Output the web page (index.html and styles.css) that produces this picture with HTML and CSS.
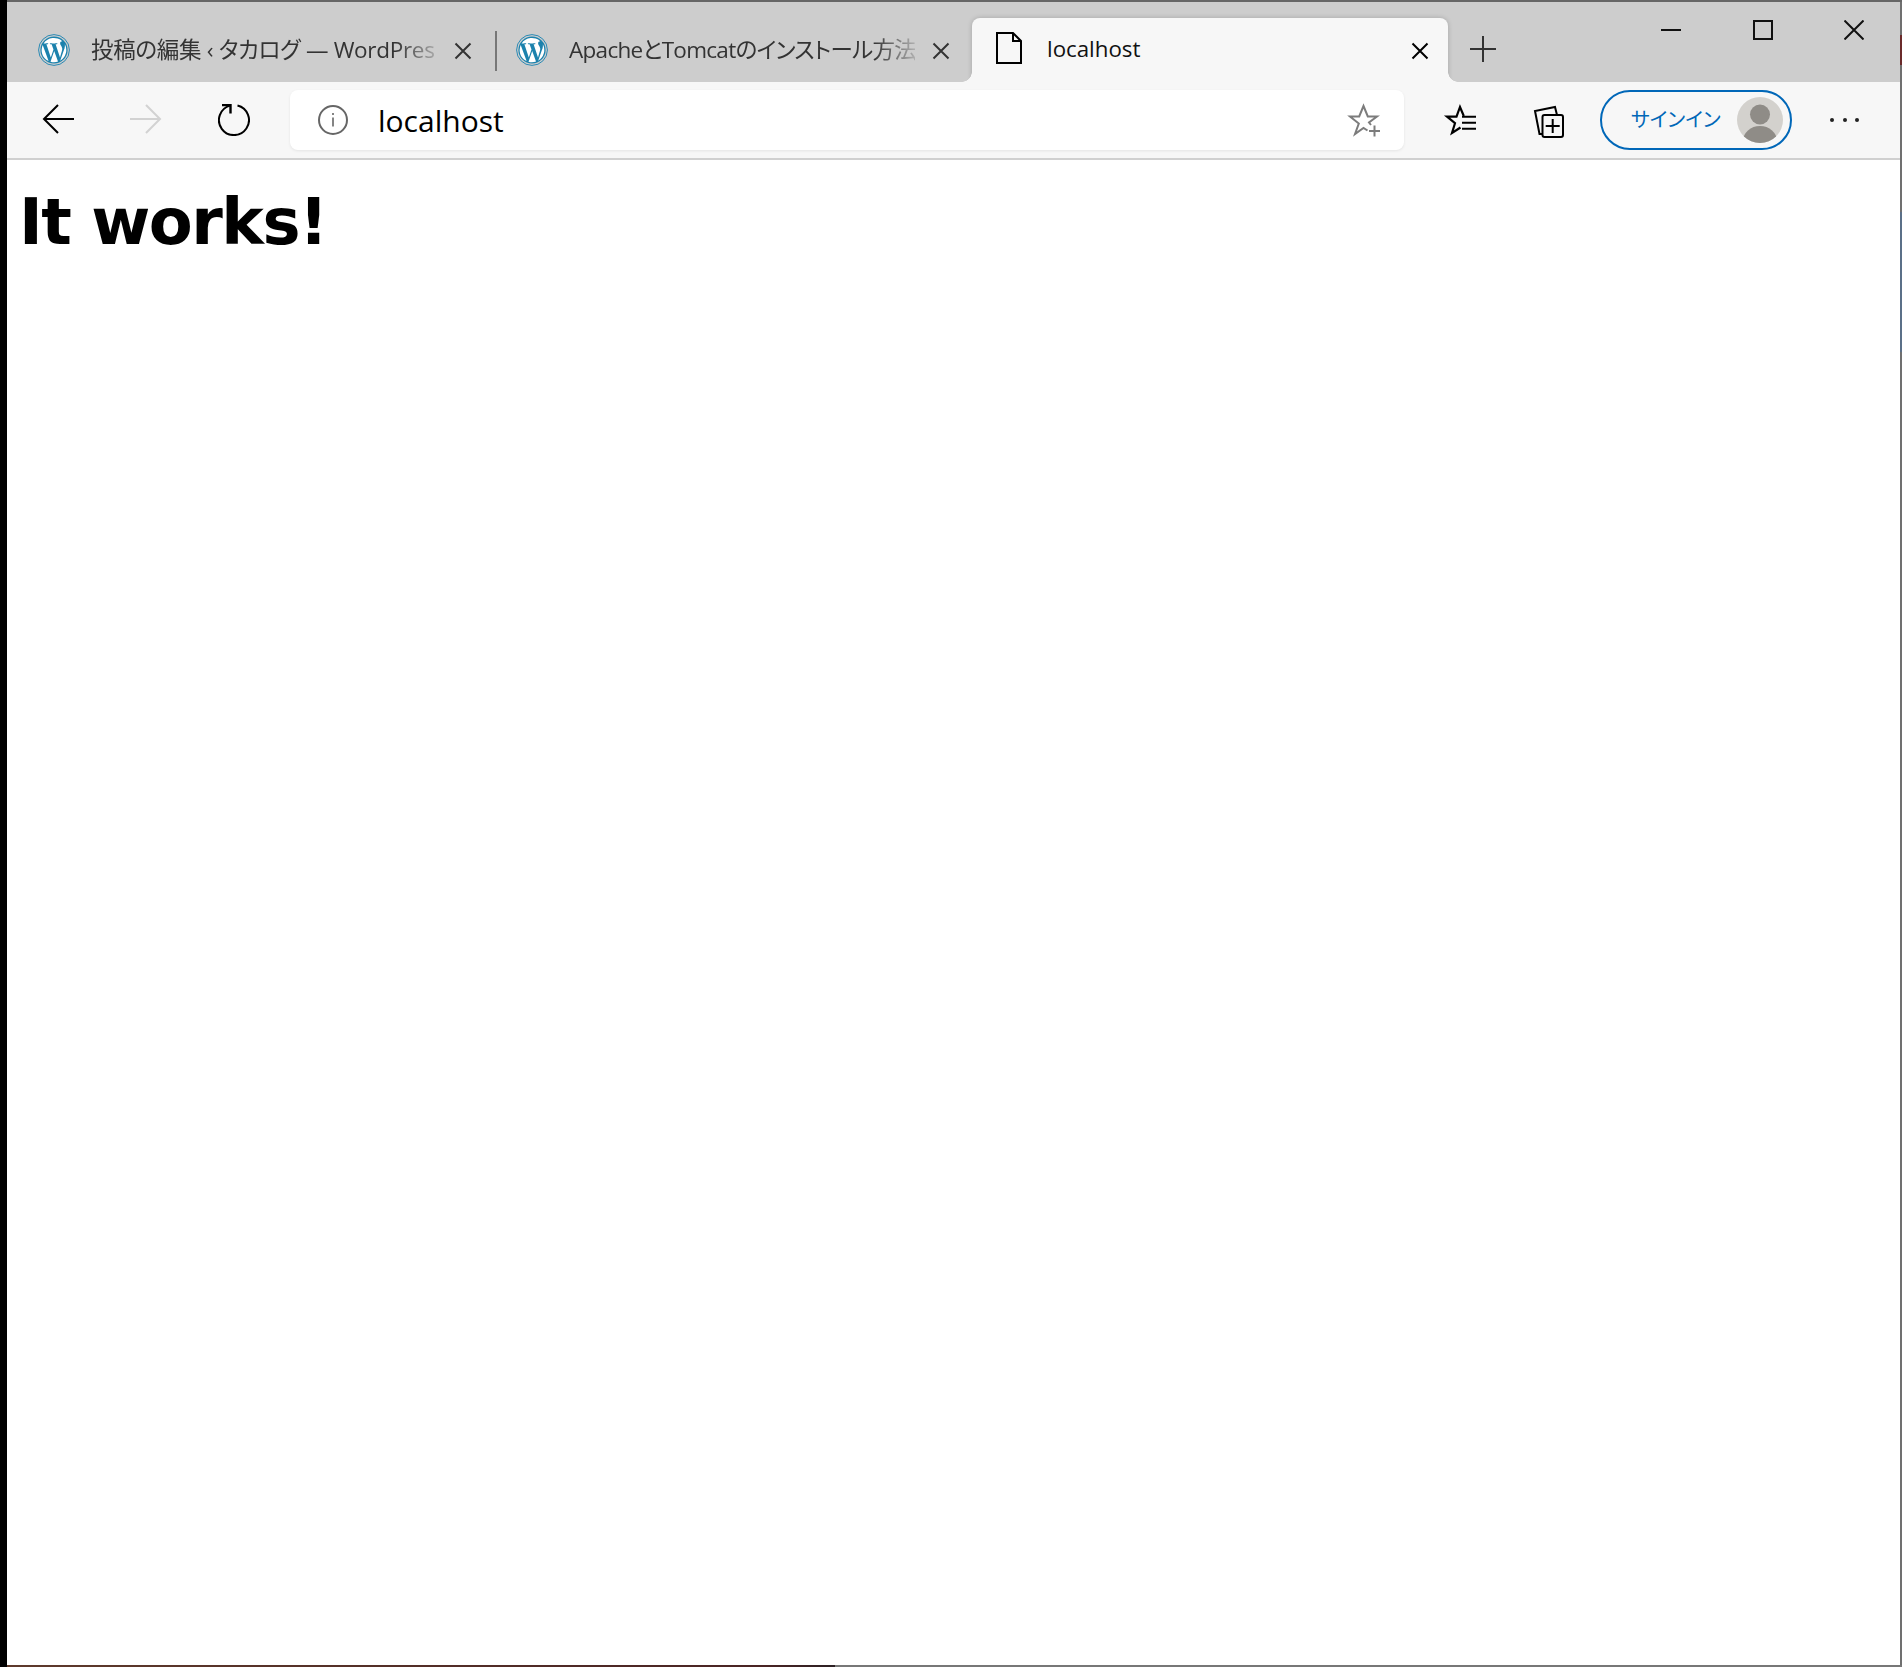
FILE: index.html
```html
<!DOCTYPE html>
<html lang="ja">
<head>
    <meta charset="UTF-8">
    <meta name="viewport" content="width=device-width, initial-scale=1.0">
    <title>localhost</title>
    <link rel="stylesheet" href="styles.css">
</head>
<body>
    <svg class="defs" width="0" height="0">
        <symbol id="wp" viewBox="0 0 32 32">
            <circle cx="16" cy="16" r="15.4" fill="none" stroke="#2a8ab5" stroke-width="1"/>
            <circle cx="16" cy="16" r="13.6" fill="#1c82ad"/>
            <path d="M3.6 16c0 4.9 2.8 9.1 7 11.1L4.7 10.9A12.4 12.4 0 0 0 3.6 16zM24.3 15.4c0-1.5-.6-2.6-1-3.4-.7-1-1.2-1.8-1.2-2.8 0-1.1.8-2 2-2h.2A12.4 12.4 0 0 0 5.6 9.4h.8c1.3 0 3.3-.2 3.3-.2.7 0 .8 1 .1 1 0 0-.7.1-1.4.1l4.4 13.2 2.7-8-1.9-5.2c-.7 0-1.3-.1-1.3-.1-.7 0-.6-1.1.1-1 0 0 2 .2 3.2.2 1.3 0 3.3-.2 3.3-.2.7 0 .8 1 .1 1 0 0-.7.1-1.4.1l4.4 13.1 1.2-4.1c.5-1.6.9-2.8.9-3.8zM16.2 17.1l-3.7 10.7a12.4 12.4 0 0 0 7.6-.2l-.1-.2zM26.8 10.1c.1.4.1.8.1 1.3 0 1.3-.2 2.7-.9 4.4l-3.8 10.9A12.4 12.4 0 0 0 26.8 10.1z" fill="#fff"/>
        </symbol>
        <symbol id="close" viewBox="0 0 18 18">
            <path d="M1.500 1.500l15 15M16.500 1.500l-15 15" fill="none" stroke="currentColor" stroke-width="2"/>
        </symbol>
    </svg>

    <div class="top-edge"></div>
    <div class="desktop">
        <div class="left-edge"></div>
        <div class="window">
            <header class="tabstrip">
                <div class="tab tab-first">
                    <svg class="favicon"><use href="#wp"/></svg>
                    <span class="tab-title">投稿の編集 ‹ タカログ — WordPres</span>
                    <svg class="tab-close"><use href="#close"/></svg>
                </div>
                <div class="tab-sep"></div>
                <div class="tab tab-second">
                    <svg class="favicon"><use href="#wp"/></svg>
                    <span class="tab-title">ApacheとTomcatのインストール方法</span>
                    <svg class="tab-close"><use href="#close"/></svg>
                </div>
                <div class="tab tab-active">
                    <svg class="page-icon" viewBox="0 0 26 32">
                        <path d="M1 1h16l8 8v22H1zM17 1v8h8" fill="none" stroke="#000" stroke-width="2"/>
                    </svg>
                    <span class="tab-title">localhost</span>
                    <svg class="tab-close"><use href="#close"/></svg>
                </div>
                <svg class="new-tab" viewBox="0 0 26 26">
                    <path d="M13 0v26M0 13h26" fill="none" stroke="#333" stroke-width="2"/>
                </svg>
                <div class="win-controls">
                    <svg class="win-btn" viewBox="0 0 20 20"><path d="M0 10h20" fill="none" stroke="#111" stroke-width="2"/></svg>
                    <svg class="win-btn" viewBox="0 0 20 20"><rect x="1" y="1" width="18" height="18" fill="none" stroke="#111" stroke-width="2"/></svg>
                    <svg class="win-btn" viewBox="0 0 20 20"><path d="M.5.5l19 19M19.500 .5l-19 19" fill="none" stroke="#111" stroke-width="2"/></svg>
                </div>
            </header>

            <nav class="toolbar">
                <div class="nav-btns">
                    <svg class="nav-icon" viewBox="0 0 32 32"><path d="M32 15H2M16 1L2 15l14 14" fill="none" stroke="#000" stroke-width="2"/></svg>
                    <svg class="nav-icon" viewBox="0 0 32 32"><path d="M0 15h30M16 1l14 14-14 14" fill="none" stroke="#d2d2d2" stroke-width="2"/></svg>
                    <svg class="nav-icon" viewBox="0 0 32 32">
                        <path d="M19.500 1.500A15 15 0 1 1 12 1.600" fill="none" stroke="#000" stroke-width="2"/>
                        <path d="M4 1h8.500v8.500" fill="none" stroke="#000" stroke-width="2.400"/>
                    </svg>
                </div>
                <div class="address">
                    <svg class="info-icon" viewBox="0 0 30 30">
                        <circle cx="15" cy="15" r="14" fill="none" stroke="#666" stroke-width="2"/>
                        <path d="M15 12.500v9M15 8v2" fill="none" stroke="#666" stroke-width="1.600"/>
                    </svg>
                    <span class="url">localhost</span>
                    <svg class="star-add" viewBox="0 0 32 32">
                        <path d="M17.500 26.500L13.500 24 5 30l3.800-10.500L0 12.500h9.200L13.500 2l4.300 10.500H27l-8 6 2 2.500" fill="none" stroke="#7c7c7c" stroke-width="2"/>
                        <path d="M24.500 21.500v11M19 27h11" fill="none" stroke="#7c7c7c" stroke-width="2"/>
                    </svg>
                </div>
                <svg class="tool-icon favs" viewBox="0 0 32 32">
                    <path d="M18.800 12L15 3l-3.500 9.700H2l8 6.500L7 29l8.500-5.500" fill="none" stroke="#000" stroke-width="2.200"/>
                    <path d="M17 12.700h14M17 18.700h14M17 24.700h14" fill="none" stroke="#000" stroke-width="2"/>
                </svg>
                <svg class="tool-icon colls" viewBox="0 0 32 32">
                    <path d="M8 28H5.500L1 5 21 1l2 8" fill="none" stroke="#000" stroke-width="2"/>
                    <rect x="8.500" y="9" width="20.500" height="22" rx="2" fill="#f7f7f7" stroke="#000" stroke-width="2"/>
                    <path d="M18.700 13v14M11.700 20h14" fill="none" stroke="#000" stroke-width="2"/>
                </svg>
                <div class="signin">
                    <span class="signin-label">サインイン</span>
                    <svg class="avatar" viewBox="0 0 46 46">
                        <defs><clipPath id="av"><circle cx="23" cy="23" r="23"/></clipPath></defs>
                        <circle cx="23" cy="23" r="23" fill="#d3d1cd"/>
                        <g clip-path="url(#av)" fill="#8f8c87">
                            <circle cx="23" cy="17.500" r="10"/>
                            <ellipse cx="23" cy="44" rx="17" ry="15"/>
                        </g>
                    </svg>
                </div>
                <div class="more"><i></i><i></i><i></i></div>
            </nav>

            <main class="content">
                <h1>It works!</h1>
            </main>
        </div>
        <div class="right-edge"></div>
    </div>
    <div class="bottom-edge"></div>
</body>
</html>
```

FILE: styles.css
```css
* {
    box-sizing: border-box;
}
html, body {
    height: 100%;
}
body {
    margin: 0;
    background-color: #000;
    display: flex;
    flex-direction: column;
    font-family: "Open Sans", "Noto Sans CJK JP", sans-serif;
    font-feature-settings: "palt";
    overflow: hidden;
}
.defs {
    display: none;
}

/* screen edges around the browser window */
.top-edge {
    height: 2px;
    flex: none;
    background-color: #666;
    margin-left: 7px;
}
.desktop {
    flex: 1;
    display: flex;
    min-height: 0;
}
.left-edge {
    width: 7px;
    flex: none;
    background-color: #000;
}
.right-edge {
    width: 2px;
    flex: none;
    background: linear-gradient(#707070 33px, #6b2b2b 33px, #6b2b2b 63px, #707070 63px, #707070 210px, #5b7088 210px, #5b7088 350px, #707070 350px);
}
.bottom-edge {
    height: 2px;
    flex: none;
    margin-left: 7px;
    background: linear-gradient(90deg, #5e3a2c, #4a2424 40%, #2c2024 43.700%, #777 43.700%);
}
.window {
    flex: 1;
    display: flex;
    flex-direction: column;
    min-width: 0;
    background-color: #fff;
}

/* tabs */
.tabstrip {
    height: 80px;
    flex: none;
    display: flex;
    align-items: flex-end;
    background-color: #cdcdcd;
    position: relative;
    overflow: hidden;
}
.tab {
    height: 64px;
    flex: none;
    display: flex;
    align-items: center;
    color: #333;
    font-size: 22.500px;
}
.tab-first {
    width: 488px;
    padding-left: 31px;
    letter-spacing: -0.300px;
}
.tab-second {
    width: 475px;
    padding-left: 19px;
    letter-spacing: -0.700px;
}
.tab-sep {
    width: 2px;
    height: 40px;
    flex: none;
    margin-bottom: 11px;
    background-color: #777;
}
.favicon {
    width: 32px;
    height: 32px;
    flex: none;
    margin-right: 21px;
}
.tab-title {
    width: 346px;
    flex: none;
    white-space: nowrap;
    overflow: hidden;
    -webkit-mask-image: linear-gradient(90deg, #000 88%, rgba(0, 0, 0, 0.2) 100%);
    mask-image: linear-gradient(90deg, #000 88%, rgba(0, 0, 0, 0.2) 100%);
    line-height: 32px;
}
.tab-close {
    width: 18px;
    height: 18px;
    flex: none;
    margin-left: 17px;
    margin-top: 2px;
    color: #333;
}
.tab-active {
    width: 476px;
    background-color: #f7f7f7;
    border-radius: 8px 8px 0 0;
    box-shadow: 0 0 5px rgba(0, 0, 0, 0.2);
    color: #111;
    font-size: 22.300px;
    padding-left: 24px;
    position: relative;
}
.tab-active::before,
.tab-active::after {
    content: "";
    position: absolute;
    bottom: 0;
    width: 10px;
    height: 10px;
}
.tab-active::before {
    left: -10px;
    background: radial-gradient(circle at 0 0, transparent 9.500px, #f7f7f7 10px);
}
.tab-active::after {
    right: -10px;
    background: radial-gradient(circle at 100% 0, transparent 9.500px, #f7f7f7 10px);
}
.tab-active .tab-title {
    width: 364px;
    margin-top: -2px;
    -webkit-mask-image: none;
    mask-image: none;
}
.tab-active .tab-close {
    color: #000;
    margin-left: 0;
}
.page-icon {
    width: 26px;
    height: 32px;
    flex: none;
    margin-right: 25px;
    margin-top: -4px;
}
.new-tab {
    width: 26px;
    height: 26px;
    flex: none;
    margin: 0 0 20px 22px;
}
.win-controls {
    position: absolute;
    top: 18px;
    right: 36px;
    display: flex;
    gap: 71.500px;
}
.win-btn {
    width: 20px;
    height: 20px;
    display: block;
}

/* toolbar */
.toolbar {
    height: 78px;
    flex: none;
    display: flex;
    align-items: center;
    background-color: #f7f7f7;
    border-bottom: 2px solid #d0d0d0;
    padding-left: 35px;
}
.nav-btns {
    display: flex;
    align-items: center;
    gap: 56px;
    width: 248px;
    flex: none;
}
.nav-icon {
    width: 32px;
    height: 32px;
    flex: none;
}
.address {
    width: 1114px;
    height: 60px;
    flex: none;
    display: flex;
    align-items: center;
    background-color: #fff;
    border-radius: 8px;
    box-shadow: 0 1px 3px rgba(0, 0, 0, 0.08);
    padding: 0 22px 0 28px;
}
.info-icon {
    width: 30px;
    height: 30px;
    flex: none;
}
.url {
    flex: 1;
    margin-left: 30px;
    margin-top: 2px;
    font-size: 30px;
    line-height: 40px;
    color: #000;
}
.star-add {
    width: 32px;
    height: 32px;
    flex: none;
    overflow: visible;
}
.tool-icon {
    width: 32px;
    height: 32px;
    flex: none;
    overflow: visible;
}
.favs {
    margin-left: 41px;
}
.colls {
    margin-left: 57px;
    margin-top: 4px;
}
.signin {
    width: 192px;
    height: 60px;
    flex: none;
    margin-left: 34px;
    display: flex;
    align-items: center;
    justify-content: space-between;
    border: 2px solid #0067b8;
    border-radius: 30px;
    padding: 0 7px 0 29px;
}
.signin-label {
    font-size: 20px;
    color: #0067b8;
    white-space: nowrap;
    margin-top: -4px;
}
.avatar {
    width: 46px;
    height: 46px;
    flex: none;
}
.more {
    margin-left: 38px;
    display: flex;
    gap: 8.500px;
}
.more i {
    width: 4px;
    height: 4px;
    border-radius: 50%;
    background-color: #222;
}

/* page */
.content {
    flex: 1;
    padding: 25px 12px;
}
h1 {
    margin: 0;
    font-family: "DejaVu Sans", Verdana, sans-serif;
    font-size: 64px;
    font-weight: bold;
    line-height: 75px;
    letter-spacing: -1.500px;
    color: #000;
}
```
